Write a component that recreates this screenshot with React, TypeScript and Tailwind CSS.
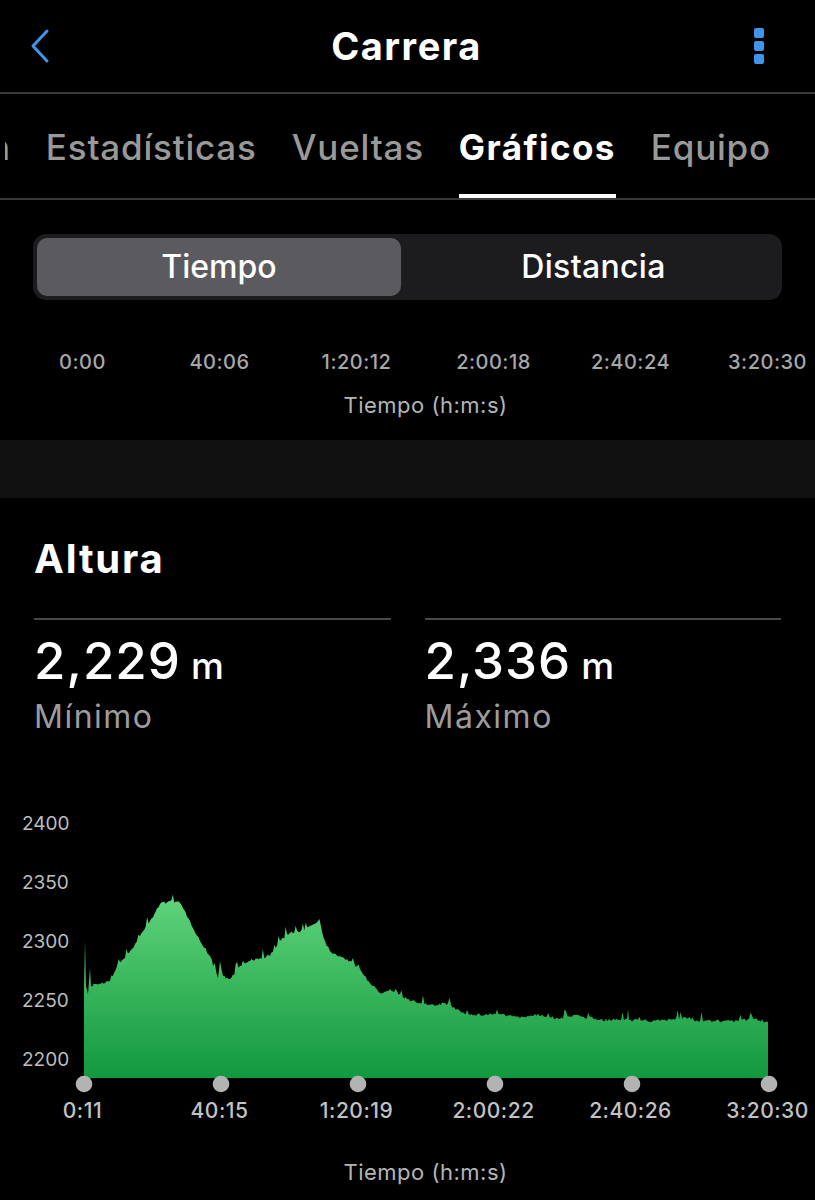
import React from 'react'

const font = { fontFamily: 'Inter, "Noto Sans", sans-serif' }

const tabs = ['Resumen', 'Estadísticas', 'Vueltas', 'Gráficos', 'Equipo']
const topTicks = ['0:00', '40:06', '1:20:12', '2:00:18', '2:40:24', '3:20:30']
const bottomTicks = ['0:11', '40:15', '1:20:19', '2:00:22', '2:40:26', '3:20:30']
const yTicks = ['2400', '2350', '2300', '2250', '2200']

// rough shape of the elevation profile, page coords
const keys: [number, number][] = [
    [84, 985], [85, 940], [86, 985], [88, 993], [90, 967], [91, 985], [95, 983], [105, 982],
    [110, 980], [117, 965], [125, 957], [132, 948], [140, 935], [150, 920], [160, 903],
    [170, 900], [180, 902], [190, 920], [200, 940], [210, 955], [218, 977], [220, 960],
    [223, 975], [230, 978], [240, 965], [250, 960], [260, 957], [270, 955], [280, 940],
    [290, 932], [300, 931], [310, 925], [318, 920], [325, 940], [330, 950], [340, 955],
    [350, 960], [360, 968], [370, 982], [380, 992], [390, 988], [400, 993], [410, 1000],
    [420, 1002], [435, 1005], [445, 1002], [460, 1010], [470, 1014], [500, 1013],
    [520, 1017], [535, 1013], [560, 1018], [575, 1014], [600, 1019], [627, 1018],
    [628, 1008], [629, 1019], [660, 1020], [685, 1016], [700, 1020], [730, 1020],
    [755, 1018], [768, 1021],
]

const OX = 74
const OY = 800
const BASE = 277

function buildPath() {
    let seed = 7
    const rand = () => {
        seed = (seed * 16807) % 2147483647
        return seed / 2147483647
    }
    const pts: string[] = [`M${84 - OX},${BASE}`]
    for (let i = 0; i < keys.length - 1; i++) {
        const [x0, y0] = keys[i]
        const [x1, y1] = keys[i + 1]
        const steps = Math.max(1, Math.round((x1 - x0) / 1.5))
        for (let s = 0; s < steps; s++) {
            const t = s / steps
            const x = x0 + (x1 - x0) * t
            let y = y0 + (y1 - y0) * t
            if (x1 - x0 > 2 && s > 0) {
                const r = rand()
                y += (rand() - 0.5) * 3
                if (r > 0.9) y -= 3 + rand() * 6
            }
            pts.push(`L${(x - OX).toFixed(1)},${(y - OY).toFixed(1)}`)
        }
    }
    const [lx, ly] = keys[keys.length - 1]
    pts.push(`L${lx - OX},${ly - OY}`, `L${lx - OX},${BASE}`, 'Z')
    return pts.join(' ')
}

const areaPath = buildPath()

function ElevationChart() {
    return (
        <div className="mt-[65px]">
            <div className="flex">
                <div className="flex w-[74px] flex-col gap-[39px] pl-[22px] pt-[13px]">
                    {yTicks.map((t) => (
                        <div key={t} className="text-[19px] leading-[20px] text-[#bdbdbd]">
                            {t}
                        </div>
                    ))}
                </div>
                <svg width={704} height={292} viewBox="0 0 704 292">
                    <defs>
                        <linearGradient id="elev" x1="0" y1="100" x2="0" y2="277" gradientUnits="userSpaceOnUse">
                            <stop offset="0" stopColor="#5dd279" />
                            <stop offset="1" stopColor="#12983e" />
                        </linearGradient>
                    </defs>
                    <path d={areaPath} fill="url(#elev)" />
                    {[0, 1, 2, 3, 4, 5].map((i) => (
                        <circle key={i} cx={10 + i * 137} cy={283} r={8.3} fill="#b3b3b3" />
                    ))}
                </svg>
            </div>
            <div className="mt-[6px] grid grid-cols-[repeat(6,137px)] pl-[14px]">
                {bottomTicks.map((t) => (
                    <div key={t} className="text-center text-[21px] font-medium leading-[24px] tracking-[0.5px] text-[#c2c2c2]">
                        {t}
                    </div>
                ))}
            </div>
            <div className="mt-[36px] pl-[36px] text-center text-[22px] leading-[26px] tracking-[0.5px] text-[#b5b5b5]">
                Tiempo (h:m:s)
            </div>
        </div>
    )
}

export default function App() {
    return (
        <div className="min-h-[1200px] w-[815px] overflow-hidden bg-black text-white" style={font}>
            {/* Nav bar */}
            <div className="flex h-[92px] items-center justify-between pl-[28px] pr-[44px]">
                <svg width="24" height="36" viewBox="0 0 24 36" fill="none">
                    <path d="M19 3 L5 18 L19 33" stroke="#3f95ea" strokeWidth="3" strokeLinecap="round" strokeLinejoin="round" />
                </svg>
                <div className="pl-[14px] text-[38px] font-bold tracking-[1.5px]">Carrera</div>
                <div className="flex w-[24px] flex-col items-center gap-[3px]">
                    <span className="h-[10px] w-[10px] rounded-[2px] bg-[#3f95ea]" />
                    <span className="h-[10px] w-[10px] rounded-[2px] bg-[#3f95ea]" />
                    <span className="h-[10px] w-[10px] rounded-[2px] bg-[#3f95ea]" />
                </div>
            </div>
            <div className="h-[2px] bg-[#3a3a3c]" />

            {/* Tabs */}
            <div className="ml-[5px] flex h-[104px] justify-end gap-[35px] overflow-hidden pr-[44px]">
                {tabs.map((t) => {
                    const active = t === 'Gráficos'
                    return (
                        <div key={t} className="flex shrink-0 flex-col">
                            <div className={`pt-[33px] text-[35px] leading-[40px] ${active ? 'font-bold tracking-[1.4px] text-white' : 'font-medium tracking-[0.8px] text-[#999999]'}`}>
                                {t}
                            </div>
                            <div className="flex-1" />
                            <div className={`h-[4px] ${active ? 'bg-white' : 'bg-transparent'}`} />
                        </div>
                    )
                })}
            </div>
            <div className="h-[2px] bg-[#3a3a3c]" />

            {/* Segmented control */}
            <div className="mx-[33px] mt-[34px] flex h-[66px] rounded-[13px] bg-[#1c1c1e] p-[4px]">
                <div className="flex w-[364px] items-center justify-center rounded-[10px] bg-[#5b5b5f] text-[32px] font-medium">
                    Tiempo
                </div>
                <div className="flex flex-1 items-center justify-center pl-[8px] text-[32px] font-medium tracking-[0.3px]">Distancia</div>
            </div>

            {/* Top axis */}
            <div className="mt-[50px] grid grid-cols-[repeat(6,137px)] pl-[14px]">
                {topTicks.map((t) => (
                    <div key={t} className="text-center text-[20px] font-medium leading-[24px] tracking-[0.5px] text-[#a8a8a8]">
                        {t}
                    </div>
                ))}
            </div>
            <div className="mt-[18px] pl-[36px] text-center text-[22px] leading-[26px] tracking-[0.5px] text-[#b5b5b5]">
                Tiempo (h:m:s)
            </div>

            <div className="mt-[22px] h-[58px] bg-[#111111]" />

            {/* Altura */}
            <div className="px-[34px]">
                <div className="mt-[38px] text-[40px] font-bold leading-[46px] tracking-[1.8px]">Altura</div>
                <div className="mt-[36px] grid grid-cols-2 gap-[34px]">
                    {[
                        ['2,229', 'Mínimo'],
                        ['2,336', 'Máximo'],
                    ].map(([v, l]) => (
                        <div key={l}>
                            <div className="h-[2px] bg-[#48484a]" />
                            <div className="mt-[13px] flex items-baseline gap-[10px] leading-[56px]">
                                <span className="text-[51px] font-medium tracking-[1px]">{v}</span>
                                <span className="text-[37px] font-medium">m</span>
                            </div>
                            <div className="mt-[4px] text-[32px] leading-[38px] tracking-[1.5px] text-[#9c9c9c]">{l}</div>
                        </div>
                    ))}
                </div>
            </div>

            <ElevationChart />
        </div>
    )
}
